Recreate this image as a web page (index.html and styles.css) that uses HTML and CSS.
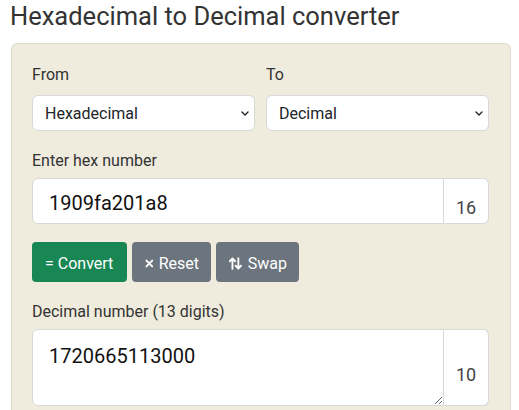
FILE: index.html
```html
<!DOCTYPE html>
<html lang="en">
<head>
<meta charset="utf-8">
<title>Hexadecimal to Decimal converter</title>
<link rel="stylesheet" href="styles.css">
</head>
<body>
<div class="page">
  <h1 class="title">Hexadecimal to Decimal converter</h1>
  <div class="panel">
    <div class="row2">
      <div class="field">
        <label class="lbl lbl-first">From</label>
        <div class="select-wrap">
          <select class="sel"><option>Hexadecimal</option></select>
          <svg class="chev" width="8" height="5" viewBox="0 0 8 5"><path d="M1 1l3 3 3-3" fill="none" stroke="#222" stroke-width="1.4" stroke-linecap="round" stroke-linejoin="round"/></svg>
        </div>
      </div>
      <div class="field">
        <label class="lbl lbl-first">To</label>
        <div class="select-wrap">
          <select class="sel"><option>Decimal</option></select>
          <svg class="chev" width="8" height="5" viewBox="0 0 8 5"><path d="M1 1l3 3 3-3" fill="none" stroke="#222" stroke-width="1.4" stroke-linecap="round" stroke-linejoin="round"/></svg>
        </div>
      </div>
    </div>

    <label class="lbl">Enter hex number</label>
    <div class="group">
      <input class="ctl inp" type="text" value="1909fa201a8">
      <span class="addon">16</span>
    </div>

    <div class="btns">
      <button class="btn btn-green">= Convert</button>
      <button class="btn btn-grey"><svg class="ico-x" width="9" height="9" viewBox="0 0 9 9"><path d="M1.5 1.5l6 6M7.5 1.5l-6 6" stroke="#fff" stroke-width="2" stroke-linecap="round"/></svg>Reset</button>
      <button class="btn btn-grey"><svg class="ico-swap" width="13" height="13" viewBox="0 0 13 13"><path d="M3.5 12V1.5M0.8 4.2L3.5 1.3 6.2 4.2M9.5 1v10.5M6.8 8.8l2.7 2.9 2.7-2.9" fill="none" stroke="#fff" stroke-width="1.9" stroke-linecap="round" stroke-linejoin="round"/></svg>Swap</button>
    </div>

    <label class="lbl">Decimal number (13 digits)</label>
    <div class="group group-ta">
      <textarea class="ctl ta">1720665113000</textarea>
      <span class="addon">10</span>
    </div>
  </div>
</div>
</body>
</html>
```

FILE: styles.css
```css
* { box-sizing: border-box; }
html, body { margin: 0; padding: 0; background: #fff; }
body {
  font-family: Roboto, "Liberation Sans", sans-serif;
  color: #212529;
  font-size: 16px;
  line-height: 24px;
  overflow: hidden;
}
.page { padding: 0 8px 0 11px; }
.title {
  margin: 1px 0 0 -1px;
  font-size: 25.5px;
  line-height: 30px;
  font-weight: 400;
  color: #333;
  height: 42px;
}
.panel {
  width: 500px;
  background: #efecdd;
  border: 1px solid #e0ddd0;
  border-radius: 6px;
  padding: 19px 21px 20px 20px;
}
.row2 {
  display: grid;
  grid-template-columns: 223px 223px;
  column-gap: 11px;
}
.field { display: flex; flex-direction: column; }
.lbl {
  display: block;
  color: #333;
  margin: 18px 0 5px;
}
.lbl-first { margin: 0 0 8px; }
.select-wrap { position: relative; }
.sel {
  -webkit-appearance: none;
  appearance: none;
  width: 100%;
  height: 36px;
  border: 1px solid #d6d8da;
  border-radius: 6px;
  background: #fff;
  font-family: inherit;
  font-size: 16px;
  color: #212529;
  padding: 0 24px 0 12px;
  margin: 0;
}
.chev { position: absolute; right: 6px; top: 16px; }
.group { display: flex; width: 457px; }
.ctl {
  flex: 1;
  border: 1px solid #d6d8da;
  border-radius: 6px 0 0 6px;
  background: #fff;
  font-family: inherit;
  font-size: 20px;
  color: #111;
  margin: 0;
  outline: none;
}
.inp { height: 46px; padding: 3px 16px 0; }
.ta {
  height: 77px;
  padding: 11px 16px 0;
  line-height: 30px;
  resize: vertical;
}
.addon {
  width: 45px;
  border: 1px solid #d6d8da;
  border-left: none;
  border-radius: 0 6px 6px 0;
  background: #fff;
  display: flex;
  align-items: center;
  justify-content: center;
  padding-top: 14px;
  font-size: 18px;
  color: #444;
}
.btns { display: flex; gap: 5px; margin-top: 18px; }
.btn {
  height: 40px;
  border: none;
  border-radius: 4px;
  color: #fff;
  font-family: inherit;
  font-size: 16px;
  padding: 3px 12px 0 13px;
  display: inline-flex;
  align-items: center;
  margin: 0;
}
.btn-green { background: #198754; width: 95px; }
.btn-grey { background: #6c757d; }
.btn-grey:nth-child(2) { width: 79px; padding-left: 13px; }
.btn-grey:nth-child(3) { width: 83px; }
.ico-x { margin-right: 5px; }
.ico-swap { margin-right: 6px; }
```
